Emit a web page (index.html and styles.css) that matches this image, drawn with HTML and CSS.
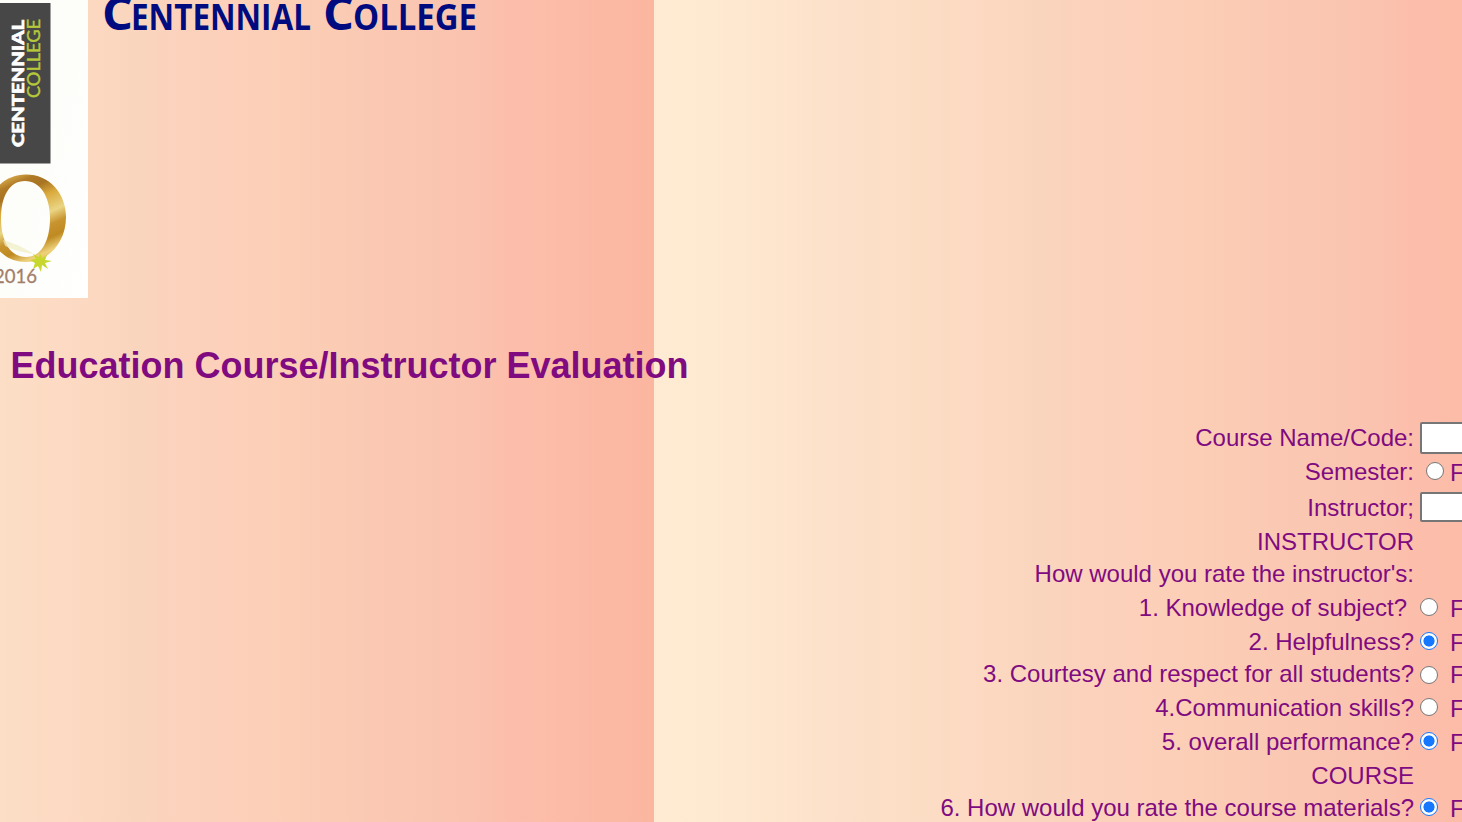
FILE: index.html
```html
<!DOCTYPE html>
<html lang="en">
<head>
<meta charset="utf-8">
<title>Centennial College</title>
<link rel="stylesheet" href="styles.css">
</head>
<body>
<header class="masthead">
  <svg class="logo" width="88" height="298" viewBox="0 0 88 298">
    <defs>
      <linearGradient id="gold" gradientUnits="userSpaceOnUse" x1="0" y1="180" x2="40" y2="270">
        <stop offset="0" stop-color="#d9ad4c"/>
        <stop offset=".1" stop-color="#b07a26"/>
        <stop offset=".2" stop-color="#a87422"/>
        <stop offset=".32" stop-color="#d9a93c"/>
        <stop offset=".5" stop-color="#ead584"/>
        <stop offset=".62" stop-color="#c8942f"/>
        <stop offset=".74" stop-color="#c08a22"/>
        <stop offset=".86" stop-color="#eed27c"/>
        <stop offset="1" stop-color="#d9ab3c"/>
      </linearGradient>
      <linearGradient id="paper" x1="0" y1="0" x2="1" y2="1">
        <stop offset="0" stop-color="#fdfdf9"/>
        <stop offset=".5" stop-color="#fdfdfa"/>
        <stop offset="1" stop-color="#fffffe"/>
      </linearGradient>
    </defs>
    <rect width="88" height="298" fill="url(#paper)"/>
    <rect y="3" width="50.5" height="160.500" fill="#474747"/>
    <text class="logo-name" transform="translate(23.500 147) rotate(-90)" textLength="127" lengthAdjust="spacingAndGlyphs">CENTENNIAL</text>
    <text class="logo-type" transform="translate(39.500 98) rotate(-90)" textLength="79" lengthAdjust="spacingAndGlyphs">COLLEGE</text>
    <path d="M26 174.500C49 174.500 66 193 66 217C66 243 48 262 26 262C3 262-13 243-13 217C-13 193 3 174.500 26 174.500ZM25 181C9 181 1 197 1 218C1 241 10 257 26 257C42 257 50 240 50 218C50 196 40 181 25 181Z" fill="url(#gold)" fill-rule="evenodd"/>
    <path d="M3 240Q18 244 34 254Q18 252 5 246Z" fill="#eeeec2" opacity=".7"/>
    <path d="M40 253L42 258L47 255L45 260L52 261L45 263L48 269L42 265L41 272L38 266L33 269L35 263L30 260L36 259L33 254L39 257Z" fill="#c7d72d"/>
    <text class="logo-year" x="-6" y="283" textLength="43" lengthAdjust="spacingAndGlyphs">2016</text>
  </svg>
  <svg class="brand" width="400" height="50" viewBox="0 0 400 50">
    <text class="brand-text cap" x="-2" y="30" textLength="31" lengthAdjust="spacingAndGlyphs">C</text>
    <text class="brand-text" x="27" y="30" textLength="180" lengthAdjust="spacingAndGlyphs">ENTENNIAL</text>
    <text class="brand-text cap" x="219" y="30" textLength="31" lengthAdjust="spacingAndGlyphs">C</text>
    <text class="brand-text" x="249" y="30" textLength="124" lengthAdjust="spacingAndGlyphs">OLLEGE</text>
  </svg>
</header>
<h1 class="title">Education Course/Instructor Evaluation</h1>
<form class="evaluation">
  <label class="question">Course Name/Code:</label><div class="answer"><input class="field tall" type="text"></div>
  <label class="question">Semester:</label><div class="answer semester"><input class="choice" type="radio"><span class="option">Fall</span></div>
  <label class="question lower">Instructor;</label><div class="answer name"><input class="field" type="text"></div>
  <label class="question">INSTRUCTOR</label><div class="answer"></div>
  <label class="question">How would you rate the instructor's:</label><div class="answer"></div>
  <label class="question spaced">1. Knowledge of subject?</label><div class="answer"><input class="choice" type="radio"><span class="option">Fair</span></div>
  <label class="question">2. Helpfulness?</label><div class="answer"><input class="choice" type="radio" checked><span class="option">Fair</span></div>
  <label class="question raised">3. Courtesy and respect for all students?</label><div class="answer low"><input class="choice" type="radio"><span>Fair</span></div>
  <label class="question">4.Communication skills?</label><div class="answer"><input class="choice" type="radio"><span class="option">Fair</span></div>
  <label class="question">5. overall performance?</label><div class="answer"><input class="choice" type="radio" checked><span class="option">Fair</span></div>
  <label class="question">COURSE</label><div class="answer"></div>
  <label class="question">6. How would you rate the course materials?</label><div class="answer"><input class="choice" type="radio" checked><span class="option">Fair</span></div>
</form>
</body>
</html>
```
FILE: styles.css
```css
* { box-sizing: border-box; }

html { overflow: hidden; }

body {
  margin: 0;
  height: 822px;
  overflow: hidden;
  color: #800b80;
  font-family: "Liberation Sans", Arial, sans-serif;
  background: linear-gradient(90deg, #ffebd3 0, #feead0 60px, #fde0c9 190px, #fbdec5 250px, #fddac3 310px, #fad5bd 390px, #fcd2bd 430px, #fcceb6 540px, #fac6b1 670px, #fac2ae 735px, #fcbfac 750px, #fbb9a4 850px, #fbb6a0 904px) -250px 0 / 904px 100% repeat-x;
}

.masthead { display: flex; height: 298px; gap: 16px; }
.logo, .brand { display: block; flex: none; overflow: hidden; }
.brand { overflow: visible; }
.logo-name { font: 900 17px Lato, sans-serif; fill: #fff; stroke: #fff; stroke-width: .6; }
.logo-type { font: 17px Lato, sans-serif; fill: #b6c93a; stroke: #b6c93a; stroke-width: .4; }
.logo-year { font: 20px Lato, sans-serif; fill: #a47e68; stroke: #a47e68; stroke-width: .3; }
.brand-text { font: bold 35px "Open Sans", sans-serif; fill: #000b80; }
.brand-text.cap { font-size: 47px; }

.title {
  margin: 47px 0 0 10.5px;
  font-size: 36px;
  line-height: 42px;
  white-space: nowrap;
}

.evaluation {
  display: grid;
  grid-template-columns: 1414px 240px;
  grid-template-rows: 34px 34px 36px 32px 34px 34px 33px 33px 34px 34px 32px 34px;
  column-gap: 6px;
  margin-top: 34px;
  font-size: 24px;
}

.question { text-align: right; line-height: 34px; white-space: pre; }
.question.spaced { padding-right: 7px; }
.question.lower { padding-top: 2px; }
.question.raised { margin-top: -1px; }

.answer { display: flex; align-items: center; gap: 12px; height: 34px; line-height: 34px; }
.semester { padding-left: 6px; gap: 6px; }
.name { margin-top: 1px; }
.option { padding-top: 2px; }

.field {
  width: 230px;
  height: 30px;
  border: 2px solid #767676;
  border-radius: 2px;
  background: #fff;
}
.field.tall { height: 32px; }

.choice {
  appearance: none;
  width: 18px;
  height: 18px;
  flex: none;
  margin: 0 0 2px;
  border: 1.5px solid #767676;
  border-radius: 50%;
  background: #fff;
}
.low .choice { margin-bottom: 0; }
.choice:checked {
  border-color: #1677ff;
  background: radial-gradient(circle, #1677ff 0 5.2px, #fff 5.9px);
}
```
